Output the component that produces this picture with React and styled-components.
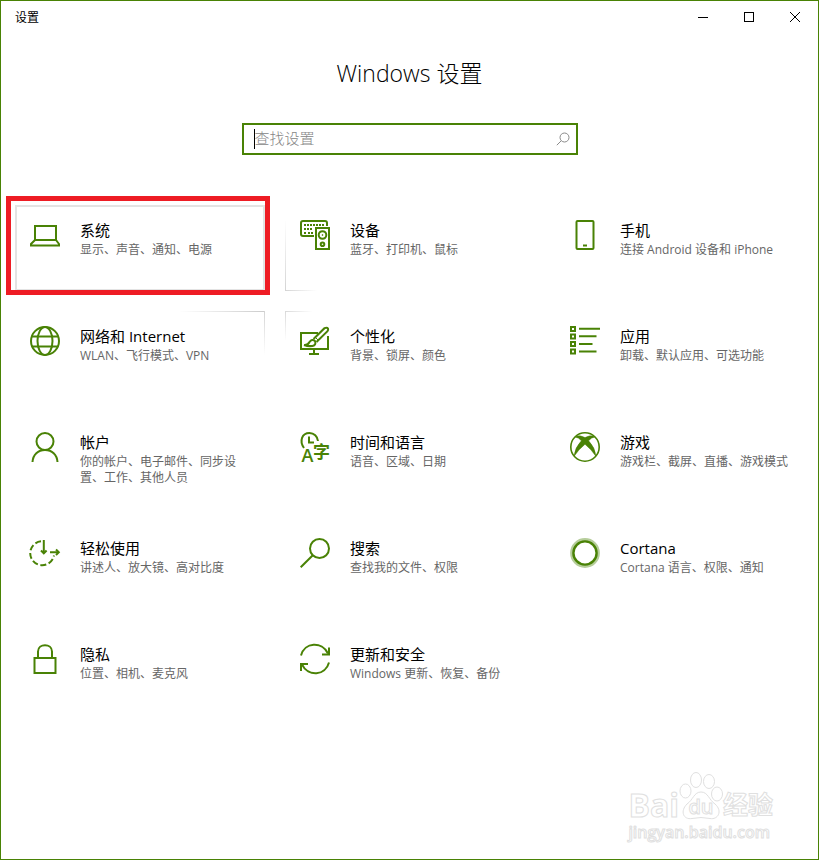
import React from "react";
import styled, { createGlobalStyle, css } from "styled-components";

const GREEN = "#498205";

const IconSvg = styled.svg`
  flex: none;
  width: 30px;
  height: 30px;
  overflow: visible;
  fill: none;
  stroke: ${GREEN};
  stroke-width: 2;
`;

const IconText = styled.text`
  fill: ${GREEN};
  stroke: none;
  font-weight: 600;
`;

const Svg = ({ children }) => (
  <IconSvg viewBox="0 0 30 30" aria-hidden="true">
    {children}
  </IconSvg>
);

const icons = {
  system: (
    <Svg>
      <rect x="5" y="6" width="21" height="14" />
      <path d="M5 20 L1 24 V25.5 H29 V24 L26 20" />
    </Svg>
  ),
  devices: (
    <Svg>
      <path d="M14 16 H3 Q1 16 1 14 V3 Q1 1 3 1 H25 Q27 1 27 3 V6" />
      <path
        d="M4 5 H24 M4 9 H13 M4 13 H6 M8 13 H13"
        strokeDasharray="2 1"
      />
      <rect x="16" y="8" width="13" height="21" />
      <circle cx="22.5" cy="15" r="3.8" />
      <circle cx="22.5" cy="15" r="0.5" strokeWidth="1" />
      <circle cx="22.5" cy="24.3" r="1.8" />
    </Svg>
  ),
  phone: (
    <Svg>
      <rect x="6.5" y="1" width="17" height="28" rx="1" />
      <path d="M13 25.5 H17" />
    </Svg>
  ),
  network: (
    <Svg>
      <circle cx="15" cy="15" r="14" />
      <ellipse cx="15" cy="15" rx="7.5" ry="14" />
      <path d="M2 10.5 H28 M2 20.5 H28" />
    </Svg>
  ),
  personalization: (
    <Svg>
      <path d="M18 7 H1 V23 H28 V10" />
      <path d="M14 23 V28 M9 28 H19" />
      <path d="M4 19 Q8 19.5 9.5 16 Q12 12.5 15 15 Q16.5 19 12.5 20 Q8 20.5 4 19" />
      <path d="M13.5 13 L24.5 2.2 Q27 1 28 2.5 Q28.5 3.8 27.5 5.2 L16.5 16" />
      <path d="M15.5 11.5 L18.5 14.5" strokeWidth="1" />
    </Svg>
  ),
  apps: (
    <Svg>
      <path d="M9 2.7 H30 M9 10.3 H26.5 M9 18 H22.5 M9 25.5 H26.5" />
      <path d="M1 1 H5 V5 H1 Z M1 8.5 H5 V12.5 H1 Z M1 16 H5 V20 H1 Z M1 23.5 H5 V27.5 H1 Z" />
    </Svg>
  ),
  accounts: (
    <Svg>
      <circle cx="15" cy="9.5" r="8.5" />
      <path d="M2.5 30 C3 22.5 8 18 15 18 S27 22.5 27.5 30" />
    </Svg>
  ),
  language: (
    <Svg>
      <path d="M4 16 C-1 9 2 1 9.5 1 C14 1 17.5 4.5 18 9" />
      <path d="M9 4.5 V10.5 H14" />
      <IconText x="1.5" y="30" fontSize="18">
        A
      </IconText>
      <IconText x="13" y="26" fontSize="17">
        字
      </IconText>
    </Svg>
  ),
  gaming: (
    <Svg>
      <circle cx="15" cy="15" r="14.2" strokeWidth="1.6" />
      <path
        d="M5.8 4.4 Q10 2.6 15 5.6 Q20 2.6 24.2 4.4 L24.6 5.2 Q21.5 5 18.6 8.8 Q25.2 15.5 25.9 24.2 Q21 17 15 12.2 Q9 17 4.1 24.2 Q4.8 15.5 11.4 8.8 Q8.500 5 5.4 5.2 Z"
        fill={GREEN}
        strokeWidth="0.5"
      />
    </Svg>
  ),
  ease: (
    <Svg>
      <path
        d="M11 3.3 A12 12 0 1 0 24 17.5"
        strokeDasharray="6 2.6"
      />
      <path d="M13.8 2 V15 M20 14.2 H28" />
      <path d="M11 12.5 L13.8 15.3 L16.6 12.5 M26 11.5 L28.8 14.2 L26 17" />
    </Svg>
  ),
  search: (
    <Svg>
      <circle cx="19.5" cy="10.5" r="9.5" />
      <path d="M12.8 17.2 L0.7 29.3" />
    </Svg>
  ),
  cortana: (
    <Svg>
      <circle cx="15" cy="15" r="13.4" strokeWidth="3" opacity="0.4" />
      <circle cx="15" cy="15" r="11.6" strokeWidth="2.4" />
    </Svg>
  ),
  privacy: (
    <Svg>
      <rect x="4.5" y="14" width="21" height="15" />
      <path d="M8 14 V7.5 C8 -1 22 -1 22 7.5 V14" />
    </Svg>
  ),
  update: (
    <Svg>
      <path d="M1 11.5 C4.5 -2 22 -3 28 9.5" />
      <path d="M29 3.5 V10.5 H22" />
      <path d="M29 18.5 C25.5 32 8 33 2 20.5" />
      <path d="M1 27 V20 H8" />
    </Svg>
  ),
};

const categories = [
  { icon: "system", title: "系统", text: "显示、声音、通知、电源", marked: true },
  { icon: "devices", title: "设备", text: "蓝牙、打印机、鼠标", glow: "bottomLeft" },
  { icon: "phone", title: "手机", text: "连接 Android 设备和 iPhone" },
  { icon: "network", title: "网络和 Internet", text: "WLAN、飞行模式、VPN", glow: "topRight" },
  { icon: "personalization", title: "个性化", text: "背景、锁屏、颜色", glow: "topLeft" },
  { icon: "apps", title: "应用", text: "卸载、默认应用、可选功能" },
  { icon: "accounts", title: "帐户", text: "你的帐户、电子邮件、同步设置、工作、其他人员" },
  { icon: "language", title: "时间和语言", text: "语音、区域、日期" },
  { icon: "gaming", title: "游戏", text: "游戏栏、截屏、直播、游戏模式" },
  { icon: "ease", title: "轻松使用", text: "讲述人、放大镜、高对比度" },
  { icon: "search", title: "搜索", text: "查找我的文件、权限" },
  { icon: "cortana", title: "Cortana", text: "Cortana 语言、权限、通知" },
  { icon: "privacy", title: "隐私", text: "位置、相机、麦克风" },
  { icon: "update", title: "更新和安全", text: "Windows 更新、恢复、备份" },
];

const App = () => {
  return (
    <>
      <GlobalStyle />
      <Window>
        <TitleBar>
          <WindowName>设置</WindowName>
          <CaptionButton aria-label="最小化">
            <CaptionSvg viewBox="0 0 12 12">
              <path d="M1 6.5 H11" />
            </CaptionSvg>
          </CaptionButton>
          <CaptionButton aria-label="最大化">
            <CaptionSvg viewBox="0 0 12 12">
              <rect x="1.5" y="1.5" width="9" height="9" />
            </CaptionSvg>
          </CaptionButton>
          <CaptionButton aria-label="关闭">
            <CaptionSvg viewBox="0 0 12 12">
              <path d="M1 1 L11 11 M11 1 L1 11" />
            </CaptionSvg>
          </CaptionButton>
        </TitleBar>

        <Heading>Windows 设置</Heading>

        <SearchBox>
          <Caret />
          <SearchInput type="text" placeholder="查找设置" aria-label="查找设置" />
          <SearchSvg viewBox="0 0 14 14" aria-hidden="true">
            <circle cx="8.5" cy="5.5" r="4.5" />
            <path d="M5.2 8.8 L0.8 13.2" />
          </SearchSvg>
        </SearchBox>

        <Grid>
          {categories.map((item) => (
            <Tile key={item.icon} href={"#" + item.icon} $marked={item.marked} $glow={item.glow}>
              {icons[item.icon]}
              <TileBody>
                <TileTitle>{item.title}</TileTitle>
                <TileText>{item.text}</TileText>
              </TileBody>
            </Tile>
          ))}
        </Grid>

        <Watermark>
          <Brand>
            <BrandText>Bai</BrandText>
            <Paw viewBox="0 0 44 50" aria-hidden="true">
              <ellipse cx="6.5" cy="20" rx="5.5" ry="7" />
              <ellipse cx="17" cy="9" rx="5.5" ry="7.5" />
              <ellipse cx="30" cy="10.5" rx="5.5" ry="7" />
              <ellipse cx="38" cy="23" rx="5.5" ry="7" />
              <path d="M22 21 C29 21 30 29 36 33 C44 40 39 49 31 47.5 Q22 45.5 13 47.5 C4 49 1 40 8 33 C14 29 15 21 22 21 Z" />
              <text x="22" y="43" textAnchor="middle">
                du
              </text>
            </Paw>
            <BrandName>经验</BrandName>
          </Brand>
          <Site>jingyan.baidu.com</Site>
        </Watermark>
      </Window>
    </>
  );
};

export default App;

const GlobalStyle = createGlobalStyle`
  * {
    box-sizing: border-box;
  }
  body {
    margin: 0;
    background-color: #fff;
    color: #000;
    font-family: "Open Sans", "Noto Sans CJK SC", sans-serif;
  }
`;

const Window = styled.main`
  position: relative;
  min-height: 100vh;
  border: 1px solid ${GREEN};
`;

const TitleBar = styled.header`
  display: flex;
  align-items: center;
  height: 32px;
`;

const WindowName = styled.span`
  flex: 1;
  padding-left: 14px;
  font-size: 12px;
`;

const CaptionButton = styled.button`
  display: flex;
  align-items: center;
  justify-content: center;
  width: 46px;
  height: 32px;
  padding: 0;
  border: none;
  background: none;

  &:hover {
    background-color: #e5e5e5;
  }
`;

const CaptionSvg = styled.svg`
  width: 12px;
  height: 12px;
  fill: none;
  stroke: #000;
`;

const Heading = styled.h1`
  margin: 24px 0 34px;
  font-size: 23px;
  font-weight: 300;
  line-height: 32px;
  text-align: center;
`;

const SearchBox = styled.div`
  display: flex;
  align-items: center;
  width: 336px;
  max-width: 90%;
  height: 32px;
  margin: 0 auto 50px;
  padding: 0 6px 0 10px;
  border: 2px solid ${GREEN};
`;

const Caret = styled.span`
  width: 1px;
  height: 20px;
  background-color: #000;
`;

const SearchInput = styled.input`
  flex: 1;
  min-width: 0;
  padding: 0 0 2px;
  border: none;
  outline: none;
  background: none;
  font-family: inherit;
  font-size: 15px;

  &::placeholder {
    color: #858585;
    font-weight: 300;
  }
`;

const SearchSvg = styled.svg`
  width: 14px;
  height: 14px;
  fill: none;
  stroke: #8a8a8a;
`;

const Grid = styled.nav`
  display: grid;
  grid-template-columns: repeat(auto-fill, 250px);
  grid-auto-rows: minmax(86px, auto);
  gap: 20px;
  padding: 0 12px 0 14px;
`;

const glows = {
  bottomLeft: css`
    background-image: linear-gradient(to top, #d4d4d4, transparent),
      linear-gradient(to right, #d4d4d4, transparent);
    background-size: 1px 72px, 32px 1px;
    background-position: left bottom;
  `,
  topRight: css`
    background-image: linear-gradient(to bottom, #d4d4d4, transparent),
      linear-gradient(to left, #cccccc, transparent);
    background-size: 1px 44px, 86px 1px;
    background-position: right top;
  `,
  topLeft: css`
    background-image: linear-gradient(to bottom, #d9d9d9, transparent),
      linear-gradient(to right, #d9d9d9, transparent);
    background-size: 1px 30px, 28px 1px;
    background-position: left top;
  `,
};

const Tile = styled.a`
  position: relative;
  display: flex;
  align-items: flex-start;
  gap: 20px;
  padding: 15px;
  background-repeat: no-repeat;
  color: inherit;
  text-decoration: none;
  ${(props) => glows[props.$glow]}

  ${(props) =>
    props.$marked &&
    css`
      box-shadow: inset 0 0 0 2px #e3e3e3;

      &::after {
        content: "";
        position: absolute;
        inset: -9px -5px -4px -9px;
        border: 5px solid #ee1c24;
      }
    `}
`;

const TileBody = styled.div`
  flex: 1;
  min-width: 0;
`;

const TileTitle = styled.div`
  margin-bottom: 2px;
  font-size: 15px;
  line-height: 20px;
`;

const TileText = styled.div`
  color: #666;
  font-size: 12px;
  line-height: 16px;
`;

const Watermark = styled.div`
  position: absolute;
  right: 45px;
  bottom: 16px;
  color: #fff;
  -webkit-text-stroke: 1px #e0e0e0;
`;

const Brand = styled.div`
  display: flex;
  align-items: flex-end;
  height: 50px;
`;

const BrandText = styled.span`
  font-size: 32px;
  font-weight: 700;
  line-height: 32px;
`;

const BrandName = styled.span`
  font-size: 25px;
  font-weight: 700;
  line-height: 34px;
`;

const Paw = styled.svg`
  width: 44px;
  height: 50px;
  fill: #fff;
  stroke: #e0e0e0;

  text {
    font-size: 20px;
    font-weight: 600;
  }
`;

const Site = styled.div`
  font-size: 16px;
  font-weight: 600;
  line-height: 22px;
`;
